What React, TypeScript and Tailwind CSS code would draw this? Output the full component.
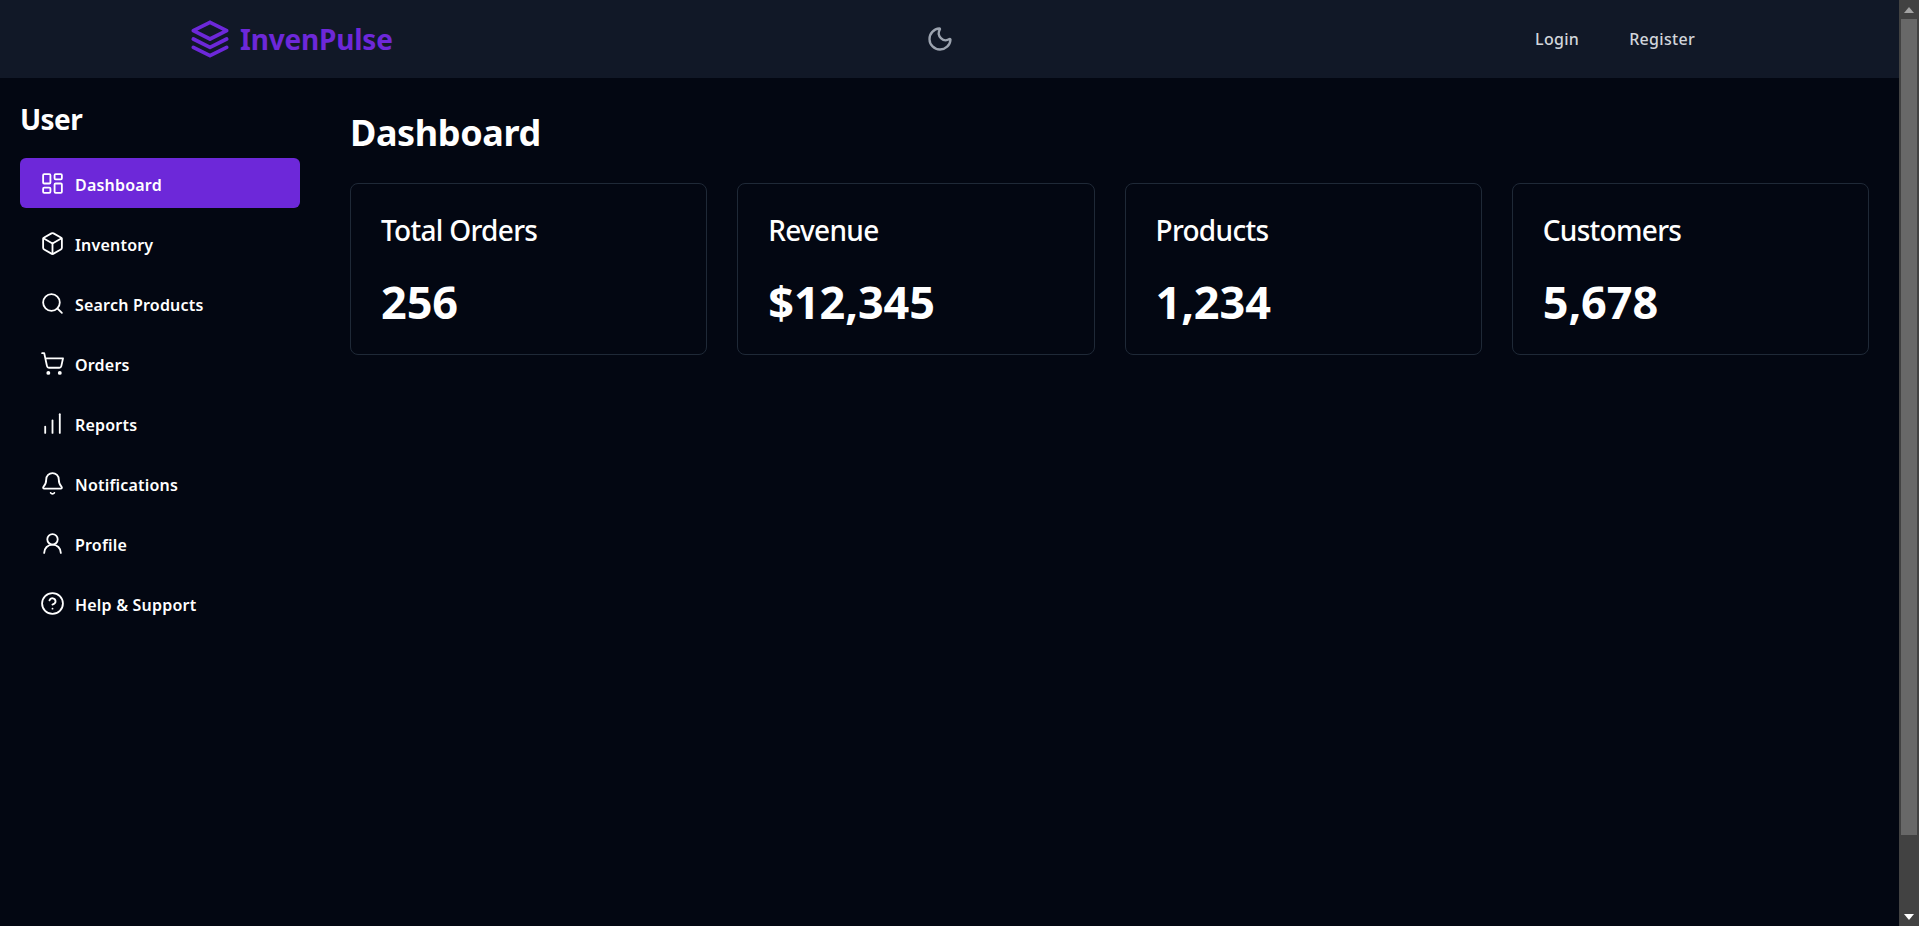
import { Box, Bell, ChartNoAxesColumnIncreasing, CircleHelp, LayoutDashboard, Moon, Search, ShoppingCart, UserRound } from "lucide-react";
import { TbStack2 } from "react-icons/tb";

const navItems = [
    { label: "Dashboard", icon: LayoutDashboard, active: true },
    { label: "Inventory", icon: Box },
    { label: "Search Products", icon: Search },
    { label: "Orders", icon: ShoppingCart },
    { label: "Reports", icon: ChartNoAxesColumnIncreasing },
    { label: "Notifications", icon: Bell },
    { label: "Profile", icon: UserRound },
    { label: "Help & Support", icon: CircleHelp },
];

const stats = [
    { title: "Total Orders", value: "256" },
    { title: "Revenue", value: "$12,345" },
    { title: "Products", value: "1,234" },
    { title: "Customers", value: "5,678" },
];

const Scrollbar = () => {
    return (
        <div className="w-5 h-full shrink-0 bg-[#424242] flex flex-col items-center">
            <div className="h-[19px] w-full flex items-center justify-center">
                <svg width="10" height="6" viewBox="0 0 10 6"><path d="M5 0 L10 6 L0 6 Z" fill="#a3a3a3" /></svg>
            </div>
            <div className="w-4 h-[816px] bg-[#686868]" />
            <div className="flex-1" />
            <div className="h-[19px] w-full flex items-center justify-center">
                <svg width="10" height="6" viewBox="0 0 10 6"><path d="M0 0 L10 0 L5 6 Z" fill="#ffffff" /></svg>
            </div>
        </div>
    )
}

const App = () => {
    return (
        <div className="h-screen w-full flex overflow-hidden bg-[#030712] text-white font-['Noto_Sans',sans-serif]">
            <div className="flex-1 min-w-0 flex flex-col">
                <header className="h-[78px] shrink-0 bg-[#111827] pl-[185px] pr-[204px] flex items-center">
                    <div className="flex-1 flex items-center gap-[5px]">
                        <TbStack2 className="size-[50px] text-[#6d28d9]" strokeWidth={1.8} />
                        <span className="text-[28px] font-bold tracking-[-0.2px] text-[#6d28d9]">InvenPulse</span>
                    </div>
                    <Moon className="size-7 text-[#9ca3af]" />
                    <nav className="flex-1 flex items-center justify-end gap-[50px] text-[#d1d5db] text-base font-medium tracking-[0.3px]">
                        <span>Login</span>
                        <span>Register</span>
                    </nav>
                </header>
                <div className="flex-1 flex min-h-0">
                    <aside className="w-[320px] shrink-0 p-5">
                        <h2 className="text-[28px] leading-[36px] pt-[3px] font-bold tracking-[-0.6px] mb-[21px]">User</h2>
                        <ul className="flex flex-col gap-[10px]">
                            {navItems.map((item) => (
                                <li
                                    key={item.label}
                                    className={`h-[50px] flex items-center gap-[10px] pl-5 rounded-md text-base font-semibold tracking-[0.2px] ${item.active ? "bg-[#6d28d9]" : ""}`}
                                >
                                    <item.icon className="size-[25px]" strokeWidth={1.75} />
                                    <span className="pt-1">{item.label}</span>
                                </li>
                            ))}
                        </ul>
                    </aside>
                    <main className="flex-1 min-w-0 p-[30px] pt-[32px]">
                        <h1 className="text-4xl font-bold tracking-[-0.4px] leading-[45px] mb-[28px]">Dashboard</h1>
                        <div className="grid grid-cols-4 gap-[30px]">
                            {stats.map((stat) => (
                                <div key={stat.title} className="h-[172px] rounded-lg border border-[#1f2937] p-[30px]">
                                    <h3 className="text-[28px] leading-[32px] font-medium tracking-[-0.7px] mb-[30px]">{stat.title}</h3>
                                    <p className="text-[45px] leading-[52px] font-bold tracking-[-0.1px]">{stat.value}</p>
                                </div>
                            ))}
                        </div>
                    </main>
                </div>
            </div>
            <Scrollbar />
        </div>
    )
}

export default App
